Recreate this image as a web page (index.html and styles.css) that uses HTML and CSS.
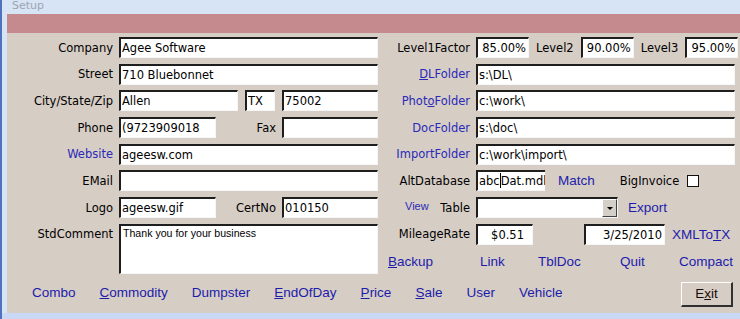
FILE: index.html
```html
<!DOCTYPE html>
<html lang="en">

<head>
    <meta charset="UTF-8">
    <title>Setup</title>
    <link rel="stylesheet" href="styles.css">
</head>

<body>
    <div class="window">
        <div class="titlebar">Setup</div>
        <div class="frame">
            <div class="band"></div>
            <div class="panel">
                <div class="grid">
                    <!-- row 1 -->
                    <label class="lbl">Company</label>
                    <div class="cell"><input class="box wide" value="Agee Software"></div>
                    <label class="lbl">Level1Factor</label>
                    <div class="cell levels">
                        <input class="box pct" value="85.00%">
                        <span class="sub">Level2</span>
                        <input class="box pct" value="90.00%">
                        <span class="sub">Level3</span>
                        <input class="box pct last" value="95.00%">
                    </div>

                    <!-- row 2 -->
                    <label class="lbl">Street</label>
                    <div class="cell"><input class="box wide" value="710 Bluebonnet"></div>
                    <label class="lbl blue"><u>D</u>LFolder</label>
                    <div class="cell"><input class="box wide" value="s:\DL\"></div>

                    <!-- row 3 -->
                    <label class="lbl">City/State/Zip</label>
                    <div class="cell split">
                        <input class="box city" value="Allen">
                        <input class="box state" value="TX">
                        <input class="box zip" value="75002">
                    </div>
                    <label class="lbl blue">Phot<u>o</u>Folder</label>
                    <div class="cell"><input class="box wide" value="c:\work\"></div>

                    <!-- row 4 -->
                    <label class="lbl">Phone</label>
                    <div class="cell">
                        <input class="box half" value="(9723909018">
                        <span class="mid">Fax</span>
                        <input class="box zip" value="">
                    </div>
                    <label class="lbl blue">DocFolder</label>
                    <div class="cell"><input class="box wide" value="s:\doc\"></div>

                    <!-- row 5 -->
                    <label class="lbl blue">Website</label>
                    <div class="cell"><input class="box wide" value="ageesw.com"></div>
                    <label class="lbl blue">ImportFolder</label>
                    <div class="cell"><input class="box wide" value="c:\work\import\"></div>

                    <!-- row 6 -->
                    <label class="lbl">EMail</label>
                    <div class="cell"><input class="box wide" value=""></div>
                    <label class="lbl">AltDatabase</label>
                    <div class="cell">
                        <div class="box alt">abc<span class="caret"></span>Dat.mdb</div>
                        <a class="link match">Match</a>
                        <span class="sub big">BigInvoice</span>
                        <span class="check"></span>
                    </div>

                    <!-- row 7 -->
                    <label class="lbl">Logo</label>
                    <div class="cell">
                        <input class="box half" value="ageesw.gif">
                        <span class="mid">CertNo</span>
                        <input class="box zip" value="010150">
                    </div>
                    <div class="lbl viewtable">
                        <a class="view">View</a>
                        <span>Table</span>
                    </div>
                    <div class="cell">
                        <div class="box combo"><span class="arrow"></span></div>
                        <a class="link export">Export</a>
                    </div>

                    <!-- row 8 -->
                    <label class="lbl">StdComment</label>
                    <div class="cell memo-cell">
                        <textarea class="box memo">Thank you for your business</textarea>
                    </div>
                    <label class="lbl">MileageRate</label>
                    <div class="cell">
                        <input class="box rate" value="$0.51">
                        <input class="box date" value="3/25/2010">
                        <a class="link xml">XMLTo<u>T</u>X</a>
                    </div>

                    <!-- row 9 -->
                    <div class="tools">
                        <a class="link"><u>B</u>ackup</a>
                        <a class="link">Link</a>
                        <a class="link">TblDoc</a>
                        <a class="link">Quit</a>
                        <a class="link">Compact</a>
                    </div>
                </div>

                <div class="footer">
                    <nav class="menu">
                        <a class="link">Combo</a>
                        <a class="link"><u>C</u>ommodity</a>
                        <a class="link">Dumpster</a>
                        <a class="link"><u>E</u>ndOfDay</a>
                        <a class="link"><u>P</u>rice</a>
                        <a class="link"><u>S</u>ale</a>
                        <a class="link">User</a>
                        <a class="link">Vehicle</a>
                    </nav>
                    <button class="exit">E<u>x</u>it</button>
                </div>
            </div>
        </div>
        <div class="bottom"></div>
    </div>
</body>

</html>
```

FILE: styles.css
```css
* {
    margin: 0;
    padding: 0;
    box-sizing: border-box;
}

body {
    width: 740px;
    height: 319px;
    overflow: hidden;
    font-family: "DejaVu Sans", Verdana, sans-serif;
    font-size: 11.5px;
    color: #000;
    background-color: #d6e4f6;
}

.window {
    display: flex;
    flex-direction: column;
    height: 100%;
}

.titlebar {
    height: 14px;
    padding-left: 12px;
    line-height: 12px;
    font-size: 11px;
    color: #9ea4ae;
    background-color: #d6e4f6;
}

.frame {
    flex: 1;
    display: flex;
    flex-direction: column;
    margin-left: 7px;
    border-left: 0;
    position: relative;
}

.window::before {
    content: '';
    position: absolute;
    left: 0;
    top: 0;
    width: 2px;
    height: 319px;
    background-color: #4f72bc;
}

.band {
    height: 19px;
    background-color: #c48a8e;
}

.panel {
    flex: 1;
    background-color: #d6cdc5;
    padding: 4px 7px 6px 0;
}

.bottom {
    height: 6px;
    background-color: #c9d9f5;
}

/* main form */

.grid {
    display: grid;
    grid-template-columns: 106px 259px 86px 259px;
    grid-auto-rows: 21px;
    column-gap: 6px;
    row-gap: 5.7px;
}

.lbl {
    display: flex;
    align-items: center;
    justify-content: flex-end;
    white-space: nowrap;
}

.blue {
    color: #2a2ab8;
}

.cell {
    display: flex;
    align-items: center;
    height: 21px;
}

.box {
    height: 21px;
    font: inherit;
    color: #000;
    background-color: #fff;
    border-top: 2px solid #1e1e1e;
    border-left: 2px solid #1e1e1e;
    border-right: 1px solid #f6f6f6;
    border-bottom: 1px solid #f6f6f6;
    padding: 0 1px;
    outline: none;
}

.wide {
    width: 100%;
}

.split {
    gap: 7px;
}

.city {
    width: 119px;
}

.state {
    width: 30px;
}

.zip {
    width: 96px;
}

.half {
    width: 97px;
}

.mid {
    flex: 1;
    text-align: right;
    padding-right: 6px;
}

.levels .pct {
    width: 53px;
    text-align: right;
    padding-right: 2px;
}

.levels .last {
    flex: 1;
}

.sub {
    margin: 0 7px;
    white-space: nowrap;
}

.alt {
    width: 69px;
    overflow: hidden;
    white-space: nowrap;
    line-height: 18px;
    border-right: 0;
}

.caret {
    display: inline-block;
    width: 1px;
    height: 15px;
    vertical-align: -3px;
    background-color: #000;
}

.link {
    font-family: "Liberation Sans", Arial, sans-serif;
    font-size: 13.5px;
    color: #1c1cab;
    white-space: nowrap;
}

.match {
    margin-left: 13px;
}

.big {
    margin: 0 0 0 25px;
}

.check {
    width: 12px;
    height: 12px;
    margin-left: 8px;
    border: 1px solid #111;
    background-color: #fff;
}

.viewtable {
    justify-content: space-between;
    padding-left: 21px;
}

.view {
    font-family: "Liberation Sans", Arial, sans-serif;
    font-size: 11px;
    color: #2a2ab8;
    align-self: flex-start;
    margin-top: 3px;
}

.combo {
    width: 142px;
    display: flex;
    justify-content: flex-end;
    padding: 0;
}

.arrow {
    width: 15px;
    height: 18px;
    background-color: #d4d0c8;
    border-top: 1px solid #fff;
    border-left: 1px solid #fff;
    border-right: 1px solid #404040;
    border-bottom: 1px solid #404040;
    position: relative;
}

.arrow::after {
    content: '';
    position: absolute;
    left: 4px;
    top: 7px;
    border-left: 3px solid transparent;
    border-right: 3px solid transparent;
    border-top: 3px solid #000;
}

.export {
    margin-left: 10px;
}

.memo-cell {
    grid-row: span 2;
    height: 50px;
}

.memo {
    width: 100%;
    height: 50px;
    resize: none;
    font-family: "Liberation Sans", Arial, sans-serif;
    font-size: 10.6px;
    padding: 1px 2px;
    overflow: hidden;
}

.rate {
    width: 57px;
    text-align: right;
    padding-right: 8px;
}

.date {
    width: 81px;
    margin-left: 51px;
    text-align: right;
    padding-right: 2px;
}

.xml {
    margin-left: 7px;
}

.tools {
    grid-column: 3 / 5;
    display: grid;
    grid-template-columns: 92px 58px 82px 59px auto;
    align-items: center;
    padding-left: 4px;
}

/* bottom row */

.footer {
    display: flex;
    align-items: center;
    margin-top: 10.4px;
    height: 25px;
    padding-left: 25px;
}

.menu {
    display: flex;
    gap: 24px;
    margin-top: -4px;
}

.exit {
    margin-left: auto;
    width: 52px;
    height: 25px;
    font-family: "Liberation Sans", Arial, sans-serif;
    font-size: 13.5px;
    color: #1a0a0a;
    background-color: #d6cdc5;
    border-top: 1px solid #fff;
    border-left: 1px solid #fff;
    border-right: 2px solid #303030;
    border-bottom: 2px solid #303030;
}
```
